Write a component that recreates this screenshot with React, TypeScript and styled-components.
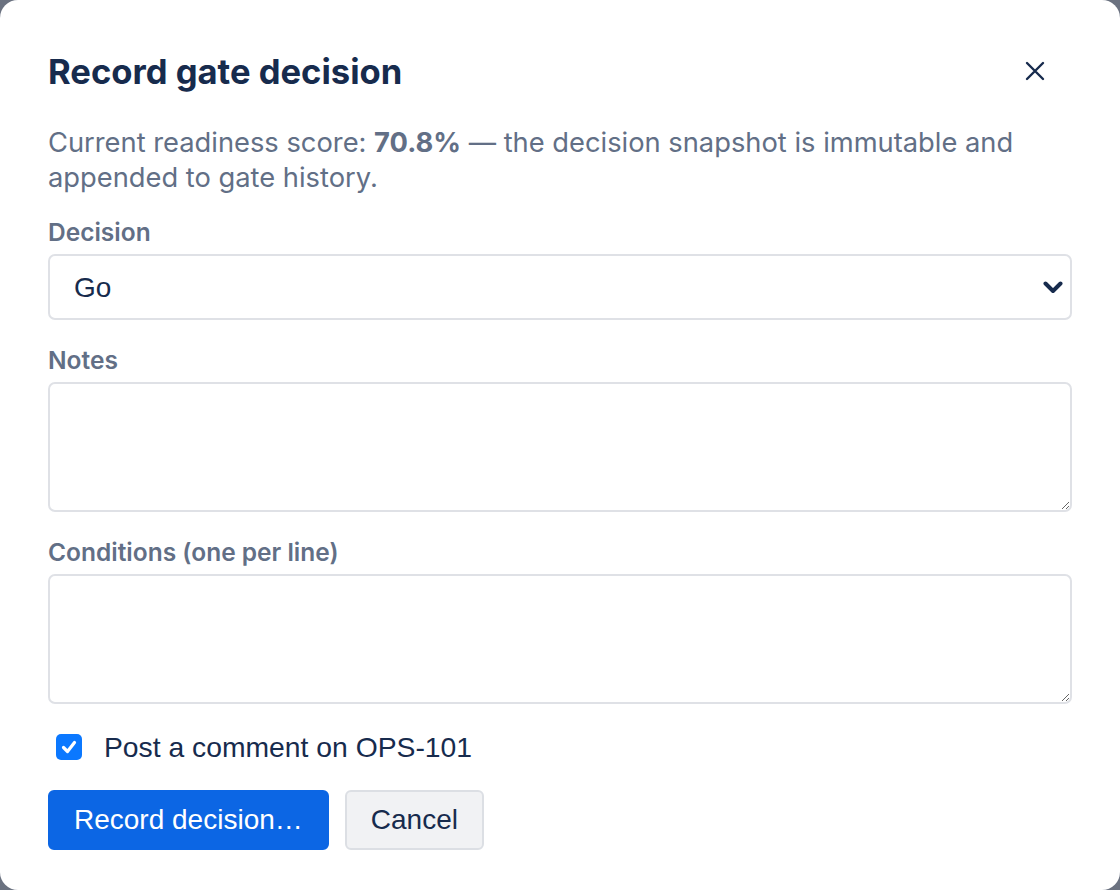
import styled, { createGlobalStyle } from 'styled-components'

const GlobalStyle = createGlobalStyle`
  html, body {
    margin: 0;
    padding: 0;
    background: #6b7280;
  }
  * {
    box-sizing: border-box;
  }
`

const Backdrop = styled.div`
  width: 1120px;
  height: 890px;
  background: #6b7280;
`

const Dialog = styled.div`
  width: 100%;
  height: 100%;
  background: #ffffff;
  border-radius: 18px;
  padding: 51px 48px 40px;
  display: flex;
  flex-direction: column;
  font-family: Inter, 'Liberation Sans', sans-serif;
  color: #172b4d;
`

const Header = styled.div`
  display: flex;
  align-items: center;
  justify-content: space-between;
  height: 40px;
`

const Title = styled.h1`
  margin: 0;
  font-size: 34.6px;
  line-height: 40px;
  font-weight: 700;
  color: #172b4d;
`

const CloseButton = styled.button`
  border: none;
  background: transparent;
  padding: 10px;
  margin-right: 17px;
  display: flex;
  cursor: pointer;
  color: #172b4d;
`

const Intro = styled.p`
  margin: 34px 0 0;
  font-size: 27.3px;
  line-height: 35px;
  color: #626f86;

  strong {
    font-weight: 700;
  }
`

const Field = styled.div<{ first?: boolean }>`
  display: flex;
  flex-direction: column;
  gap: 8px;
  margin-top: ${({ first }) => (first ? '23px' : '26px')};
`

const Label = styled.label`
  font-size: 24.5px;
  line-height: 28px;
  font-weight: 600;
  color: #626f86;
`

const SelectWrap = styled.div`
  position: relative;
`

const Select = styled.select`
  appearance: none;
  width: 100%;
  height: 66px;
  border: 2px solid #dfe1e6;
  border-radius: 7px;
  background: #ffffff;
  padding: 0 24px;
  font-family: 'Liberation Sans', Arial, sans-serif;
  font-size: 28px;
  color: #172b4d;
  outline: none;
`

const Chevron = styled.svg`
  position: absolute;
  right: 9px;
  top: 27px;
  pointer-events: none;
`

const TextArea = styled.textarea`
  width: 100%;
  height: 130px;
  border: 2px solid #dfe1e6;
  border-radius: 7px;
  padding: 12px 16px;
  font-family: 'Liberation Sans', Arial, sans-serif;
  font-size: 24px;
  color: #172b4d;
  resize: vertical;
  outline: none;
  display: block;
`

const CheckRow = styled.label`
  display: flex;
  align-items: center;
  gap: 22px;
  height: 32px;
  margin-top: 27px;
  padding-left: 8px;
  font-family: 'Liberation Sans', Arial, sans-serif;
  font-size: 28.3px;
  color: #172b4d;
`

const CheckBox = styled.span`
  width: 26px;
  height: 26px;
  border-radius: 5px;
  background: #0b78ff;
  display: flex;
  align-items: center;
  justify-content: center;
`

const Actions = styled.div`
  display: flex;
  gap: 16px;
  margin-top: 27px;
`

const Button = styled.button<{ primary?: boolean }>`
  height: 60px;
  border-radius: 6px;
  padding: 0 24px;
  font-family: 'Liberation Sans', Arial, sans-serif;
  font-size: 28px;
  cursor: pointer;
  border: 2px solid ${({ primary }) => (primary ? '#0c66e4' : '#dcdfe4')};
  background: ${({ primary }) => (primary ? '#0c66e4' : '#f1f2f4')};
  color: ${({ primary }) => (primary ? '#ffffff' : '#172b4d')};
`

export default function App() {
  return (
    <Backdrop>
      <GlobalStyle />
      <Dialog>
        <Header>
          <Title>Record gate decision</Title>
          <CloseButton aria-label="Close">
            <svg width="20" height="20" viewBox="0 0 20 20" fill="none">
              <path d="M2 2L18 18M18 2L2 18" stroke="currentColor" strokeWidth="2.4" strokeLinecap="round" />
            </svg>
          </CloseButton>
        </Header>

        <Intro>
          Current readiness score: <strong>70.8%</strong> — the decision snapshot is immutable and
          appended to gate history.
        </Intro>

        <Field first>
          <Label>Decision</Label>
          <SelectWrap>
            <Select defaultValue="go">
              <option value="go">Go</option>
              <option value="conditional">Conditional go</option>
              <option value="nogo">No go</option>
            </Select>
            <Chevron width="20" height="13" viewBox="0 0 20 13" fill="none">
              <path d="M2.5 2.5L10 10L17.5 2.5" stroke="#172b4d" strokeWidth="4" strokeLinecap="round" strokeLinejoin="round" />
            </Chevron>
          </SelectWrap>
        </Field>

        <Field>
          <Label>Notes</Label>
          <TextArea />
        </Field>

        <Field>
          <Label>Conditions (one per line)</Label>
          <TextArea />
        </Field>

        <CheckRow>
          <CheckBox>
            <svg width="18" height="18" viewBox="0 0 18 18" fill="none">
              <path d="M3.5 9.5L7.5 13.5L14.5 4.5" stroke="#ffffff" strokeWidth="3.2" strokeLinecap="round" strokeLinejoin="round" />
            </svg>
          </CheckBox>
          Post a comment on OPS-101
        </CheckRow>

        <Actions>
          <Button primary>Record decision…</Button>
          <Button>Cancel</Button>
        </Actions>
      </Dialog>
    </Backdrop>
  )
}
